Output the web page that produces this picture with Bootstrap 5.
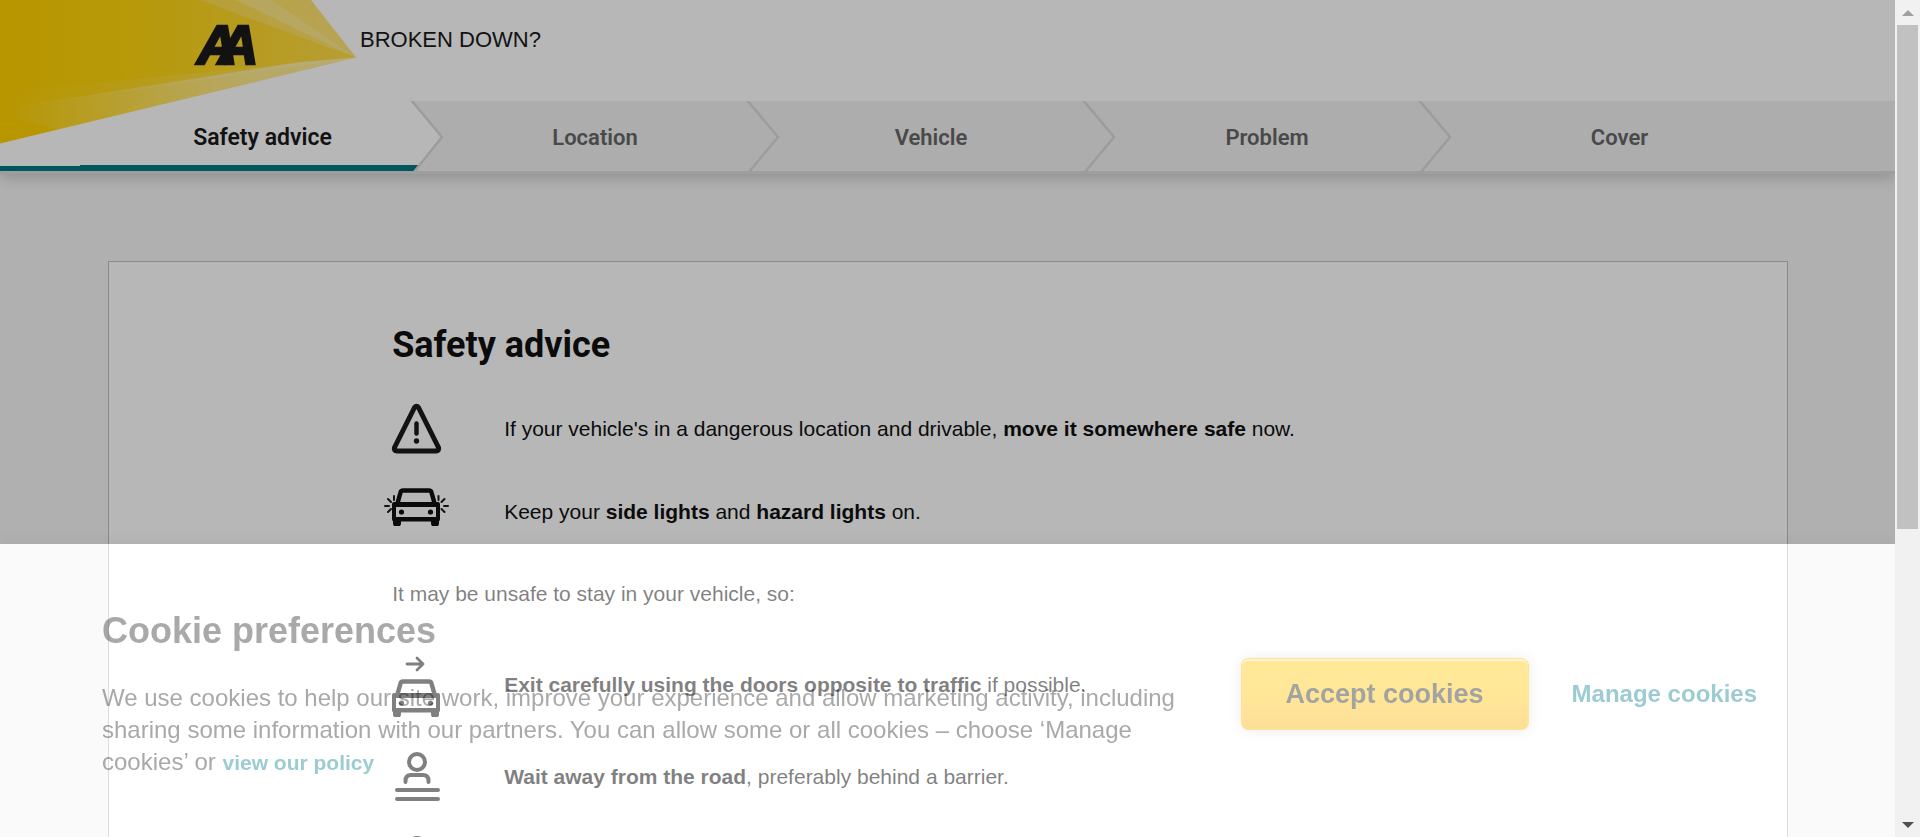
<!DOCTYPE html>
<html lang="en">
<head>
<meta charset="utf-8">
<meta name="viewport" content="width=device-width, initial-scale=1">
<title>Broken down? Safety advice</title>
<link href="https://cdn.jsdelivr.net/npm/bootstrap@5.3.0/dist/css/bootstrap.min.css" rel="stylesheet">
<style>
  :root { --bar: 25px; --cookie-h: 293px; --teal: #007883; --line: #dcdcdc; }
  body { font-family: "Liberation Sans", Arial, sans-serif; font-size: 21px; line-height: 32px; color: #101010;
         background: #f5f5f5; height: 100vh; overflow: hidden; padding-right: var(--bar); }
  .wide { max-width: 1680px; margin: 0 auto; }
  .site-head { background: #fff; border-bottom: 3px solid var(--line); box-shadow: 0 3px 14px rgba(0,0,0,.2); }
  .top-line { height: 101px; padding: 24px 0 0 360px; font-size: 22px; line-height: 32px; color: #1a1a1a; }
  .logo { left: 0; top: 0; z-index: 3; }
  .steps { background: #f2f2f2; overflow: hidden; }
  .step { width: 20%; height: 70px; padding: 4px 33px 0 0; font-family: Roboto, sans-serif; font-weight: 600;
          font-size: 22px; color: #666; text-decoration: none; }
  .step:last-child { padding-right: 0; }
  .step svg { right: 0; top: 0; z-index: 1; }
  .step.current { background: #fff; color: #1a1a1a; padding-right: 26px; font-size: 23px; }
  .step.current::before { content: ""; position: absolute; right: 100%; top: 0; bottom: 0; width: 100vw; background: #fff; border-bottom: 5px solid var(--teal); }
  .step.current::after { content: ""; position: absolute; left: -28px; right: 12px; bottom: 0; height: 6px; background: var(--teal); }
  .panel { background: #fff; border: 1px solid #c0c0c0; margin-top: 87px; padding-top: 59px; }
  .panel h1 { font-family: Roboto, sans-serif; font-size: 36px; font-weight: 700; line-height: 48px; margin: 0 0 18px; }
  .advice { min-height: 83px; }
  .advice.tall { min-height: 92px; }
  .pic { width: 112px; flex: none; }
  .pic svg { display: block; margin-left: -8px; overflow: visible; }
  .note-line { padding: 25px 0 29px; margin: 0; }
  .shade { position: fixed; top: 0; left: 0; right: var(--bar); bottom: var(--cookie-h); background: rgba(0,0,0,.283); z-index: 10; }
  .veil { position: fixed; left: 0; right: var(--bar); bottom: 0; height: var(--cookie-h); background: rgba(255,255,255,.47); z-index: 11; box-shadow: 0 0 16px rgba(0,0,0,.06); }
  .cookie { position: fixed; left: 0; right: var(--bar); bottom: 0; height: var(--cookie-h); z-index: 12; color: #a9a9a9;
            mix-blend-mode: multiply; padding: 6px 138px 0 102px; }
  .cookie h2 { font-size: 36px; font-weight: 700; line-height: 44px; margin: 0 0 29px; }
  .cookie p { font-size: 24px; line-height: 32px; margin: 0; }
  .cookie a { color: #9cccd1; font-weight: 700; text-decoration: none; }
  .cookie p a { font-size: 21px; }
  .cookie-text { width: 1080px; flex: 0 1 auto; }
  .cookie-actions { gap: 43px; }
  .btn-accept { font-size: 27px; font-weight: 700; line-height: 40px; padding: 15px 44px; color: #a3a3a3; border: 1px solid #fee492; border-radius: 7px;
                background: linear-gradient(#ffe997, #ffe797 50%, #fcdf98);
                box-shadow: inset 0 2px 1px rgba(255,255,255,.6), 0 0 14px rgba(0,0,0,.08); }
  .scroller { position: fixed; right: 0; top: 0; bottom: 0; width: var(--bar); background: #f1f1f1; z-index: 20; }
  .scroller .cap { height: 25px; }
  .thumb { height: 64%; margin: 0 2px; background: #c1c1c1; }
</style>
</head>
<body>
<header class="site-head position-relative">
  <svg class="logo position-absolute" width="357" height="144" viewBox="0 0 357 144" role="img" aria-label="AA">
    <defs>
      <linearGradient id="beam" x1="0" x2="1"><stop offset="0" stop-color="#ffd100"/><stop offset=".35" stop-color="#ffd50c"/><stop offset="1" stop-color="#ffdc48"/></linearGradient>
      <linearGradient id="ray" x1="0" x2="1"><stop offset="0" stop-color="#fff" stop-opacity="0"/><stop offset=".6" stop-color="#fff" stop-opacity=".42"/><stop offset="1" stop-color="#fff" stop-opacity=".5"/></linearGradient>
    </defs>
    <path fill="url(#beam)" d="M0 0H311L356 57.500 0 143.500Z"/>
    <path fill="#fff" fill-opacity=".2" d="M200 0H236L356 57.500Z"/>
    <path fill="#fff" fill-opacity=".4" d="M236 0H272L356 57.500Z"/>
    <path fill="#fff" fill-opacity=".26" d="M272 0H311L356 57.500Z"/>
    <path fill="url(#ray)" fill-opacity=".3" d="M0 92 356 57.500 0 110Z"/>
    <path fill="url(#ray)" d="M0 109 300 62 356 57.500 58 129.500 0 113Z"/>
    <g font-family="'Liberation Sans',sans-serif" font-weight="700" font-style="italic" font-size="56" fill="#1a1a1a" stroke="#1a1a1a" stroke-width="2.500">
      <text x="197" y="64">A</text><text x="218" y="64">A</text>
    </g>
  </svg>
  <div class="top-line">BROKEN DOWN?</div>
  <nav class="steps" aria-label="Progress">
    <div class="wide d-flex">
      <a href="#" class="step current position-relative d-flex align-items-center justify-content-center">Safety advice
        <svg class="position-absolute" width="34" height="70" viewBox="0 0 34 70"><path fill="#f2f2f2" d="M1 0 33 36 5 70H34V0Z"/><path fill="none" stroke="#dadada" stroke-width="2.500" d="M1 -1 32 36 4 71"/></svg></a>
      <a href="#" class="step position-relative d-flex align-items-center justify-content-center">Location
        <svg class="position-absolute" width="34" height="70" viewBox="0 0 34 70"><path fill="none" stroke="#dadada" stroke-width="2.500" d="M1 -1 32 36 3 71"/></svg></a>
      <a href="#" class="step position-relative d-flex align-items-center justify-content-center">Vehicle
        <svg class="position-absolute" width="34" height="70" viewBox="0 0 34 70"><path fill="none" stroke="#dadada" stroke-width="2.500" d="M1 -1 32 36 3 71"/></svg></a>
      <a href="#" class="step position-relative d-flex align-items-center justify-content-center">Problem
        <svg class="position-absolute" width="34" height="70" viewBox="0 0 34 70"><path fill="none" stroke="#dadada" stroke-width="2.500" d="M1 -1 32 36 3 71"/></svg></a>
      <a href="#" class="step d-flex align-items-center justify-content-center">Cover</a>
    </div>
  </nav>
</header>

<svg class="d-none">
  <symbol id="car" viewBox="0 0 50 38">
    <path fill="none" stroke="currentColor" stroke-width="4.500" stroke-linejoin="round" d="M6 17 9.500 4.500Q10 2.500 12 2.500H38Q40 2.500 40.500 4.500L44 17"/>
    <path fill="currentColor" fill-rule="evenodd" d="M3 14H47Q49 14 49 16V31Q49 33 48 33V35A3.500 3.500 0 0 1 40 35V33.500H10V35A3.500 3.500 0 0 1 2 35V33Q1 33 1 31V16Q1 14 3 14ZM5 19V29H45V19Z"/>
    <circle cx="10.500" cy="24" r="2.600" fill="currentColor"/><circle cx="39.500" cy="24" r="2.600" fill="currentColor"/>
  </symbol>
  <symbol id="person" viewBox="0 0 50 50">
    <g fill="none" stroke="currentColor" stroke-width="4" stroke-linecap="round"><circle cx="25" cy="11" r="8"/><path d="M13.500 31V30Q13.500 24 19 24H31Q36.500 24 36.500 30V31"/></g>
  </symbol>
</svg>

<main class="wide panel">
  <div class="row g-0"><div class="col-8 offset-2 px-1">
    <h1>Safety advice</h1>
    <div class="advice d-flex align-items-center">
      <div class="pic"><svg width="66" height="50" viewBox="-8 0 66 50" fill="none" stroke="#1a1a1a"><path stroke-width="5" stroke-linejoin="round" d="M22.500 3.500Q24.500 1 26.500 3.500L46.500 43.500Q47.500 47 44 47H5Q1.500 47 2.500 43.500Z"/><path stroke-width="4.500" stroke-linecap="round" d="M24.500 19.500V29.500"/><circle cx="24.500" cy="37" r="2.700" fill="#1a1a1a" stroke="none"/></svg></div>
      <div>If your vehicle's in a dangerous location and drivable, <strong>move it somewhere safe</strong> now.</div>
    </div>
    <div class="advice d-flex align-items-center">
      <div class="pic pb-2"><svg width="66" height="40" viewBox="-8 0 66 40"><use href="#car" x="-1" width="50" height="38"/><path fill="none" stroke="#1a1a1a" stroke-width="2" stroke-linecap="round" d="M2 8V12M-4 11 -1 14M-7 18H-3M-4 24 -1 21M46.500 8V12M52.500 11 49.500 14M56 18H52M52.500 24 49.500 21"/></svg></div>
      <div>Keep your <strong>side lights</strong> and <strong>hazard lights</strong> on.</div>
    </div>
    <p class="note-line">It may be unsafe to stay in your vehicle, so:</p>
    <div class="advice tall d-flex align-items-center">
      <div class="pic pt-1"><svg width="66" height="60" viewBox="-8 0 66 60"><path fill="none" stroke="currentColor" stroke-width="2.800" stroke-linecap="round" stroke-linejoin="round" d="M15 7H31M25 1 31 7 25 13"/><use href="#car" x="-1" y="22" width="50" height="38"/></svg></div>
      <div><strong>Exit carefully using the doors opposite to traffic</strong> if possible.</div>
    </div>
    <div class="advice tall d-flex align-items-center">
      <div class="pic"><svg width="66" height="50" viewBox="-8 0 66 50"><use href="#person" y="-1" width="50" height="50"/><path stroke="currentColor" stroke-width="4" stroke-linecap="round" d="M5 38H46M5 47H46"/></svg></div>
      <div><strong>Wait away from the road</strong>, preferably behind a barrier.</div>
    </div>
    <div class="advice tall d-flex align-items-center">
      <div class="pic"><svg width="66" height="68" viewBox="-8 0 66 68"><use href="#person" width="50" height="50"/></svg></div>
    </div>
  </div></div>
</main>

<div class="shade"></div>
<div class="veil"></div>
<section class="cookie d-flex align-items-center justify-content-between" aria-label="Cookie preferences">
  <div class="cookie-text">
    <h2>Cookie preferences</h2>
    <p>We use cookies to help our site work, improve your experience and allow marketing activity, including sharing some information with our partners. You can allow some or all cookies – choose ‘Manage cookies’ or <a href="#">view our policy</a></p>
  </div>
  <div class="cookie-actions d-flex align-items-center flex-shrink-0">
    <button type="button" class="btn btn-accept">Accept cookies</button>
    <a href="#" class="fs-4 text-nowrap">Manage cookies</a>
  </div>
</section>

<div class="scroller d-flex flex-column" aria-hidden="true">
  <div class="cap d-flex align-items-center justify-content-center"><svg width="12" height="6"><path fill="#a0a0a0" d="M6 0 12 6H0Z"/></svg></div>
  <div class="flex-grow-1"><div class="thumb"></div></div>
  <div class="cap d-flex align-items-center justify-content-center"><svg width="12" height="6"><path fill="#505050" d="M0 0H12L6 6Z"/></svg></div>
</div>
<script src="https://cdn.jsdelivr.net/npm/bootstrap@5.3.0/dist/js/bootstrap.bundle.min.js"></script>
</body>
</html>
